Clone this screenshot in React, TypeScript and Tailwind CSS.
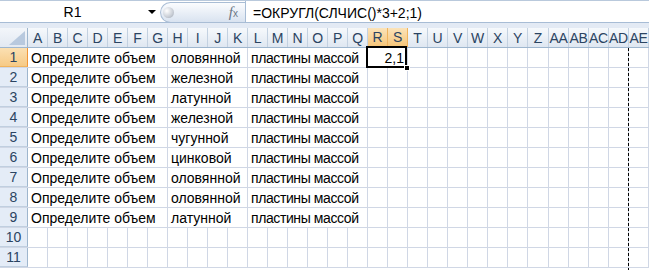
import React from "react";

const COLS = [
  "A", "B", "C", "D", "E", "F", "G", "H", "I", "J", "K", "L", "M", "N", "O",
  "P", "Q", "R", "S", "T", "U", "V", "W", "X", "Y", "Z", "AA", "AB", "AC", "AD", "AE",
];

// columns after the text overflow area (R..AE)
const TAIL = COLS.slice(17);

const ROWS: [string, string, string][] = [
  ["Определите объем", "оловянной", "пластины массой"],
  ["Определите объем", "железной", "пластины массой"],
  ["Определите объем", "латунной", "пластины массой"],
  ["Определите объем", "железной", "пластины массой"],
  ["Определите объем", "чугунной", "пластины массой"],
  ["Определите объем", "цинковой", "пластины массой"],
  ["Определите объем", "оловянной", "пластины массой"],
  ["Определите объем", "оловянной", "пластины массой"],
  ["Определите объем", "латунной", "пластины массой"],
];

function colWidth(c: string) {
  if (c === "Z") return "w-[21px]";
  if (c === "AE") return "flex-1";
  return "w-[20px]";
}

function ColHeader({ name }: { name: string }) {
  const active = name === "R" || name === "S";
  return (
    <div
      className={
        colWidth(name) +
        " h-full shrink-0 flex items-center justify-center border-r text-[14px] leading-none tracking-[-0.3px] " +
        (active
          ? "bg-gradient-to-b from-[#fbe3b9] to-[#f6c67a] border-[#f0b45e] border-b-[#f29536] border-b"
          : "bg-gradient-to-b from-[#f6f9fc] to-[#dfe7f1] border-[#c3d1e1]")
      }
    >
      <span className="text-[#2b4462]">{name}</span>
    </div>
  );
}

function RowHeader({ n }: { n: number }) {
  const active = n === 1;
  return (
    <div
      className={
        "w-[28px] h-full shrink-0 flex items-center justify-center border-r border-b text-[14px] text-[#2b4462] " +
        (active
          ? "bg-gradient-to-b from-[#fbe0b2] to-[#f6ca86] border-r-[#f29536] border-b-[#f0b45e]"
          : "bg-[#e4ecf7] border-r-[#9eb6ce] border-b-[#c0cfe0]")
      }
    >
      {n}
    </div>
  );
}

function EmptyCell({ name }: { name: string }) {
  return <div className={colWidth(name) + " h-full shrink-0 border-r border-[#d0d7e5]"} />;
}

function TextCell({ w, text, tight }: { w: string; text: string; tight?: boolean }) {
  return (
    <div
      className={
        w +
        " h-full shrink-0 border-r border-[#d0d7e5] pl-[3px] leading-[21px] whitespace-nowrap overflow-hidden" +
        (tight ? " tracking-[-0.4px]" : "")
      }
    >
      {text}
    </div>
  );
}

export default function App() {
  return (
    <div className="relative w-[649px] h-[270px] overflow-hidden bg-white font-['Liberation_Sans',Arial,sans-serif] text-[14px] text-black">
      {/* formula bar */}
      <div className="h-[28px] bg-[#e3eaf4] border-t border-[#b9c9dc] flex flex-col">
        <div className="h-[22px] flex bg-white border-b border-[#a7bcd5]">
          <div className="w-[160px] flex items-center">
            <div className="w-[145px] text-center pt-[2px]">R1</div>
            <div className="w-0 h-0 border-l-[4px] border-r-[4px] border-t-[4px] border-l-transparent border-r-transparent border-t-black ml-[3px]" />
          </div>
          <div className="w-[85px] mt-[1px] mb-[-1px] rounded-l-full border border-r-0 border-[#a9bdd5] bg-gradient-to-b from-[#fbfcfe] to-[#d9e3f0] flex items-center pl-[2px]">
            <div className="w-[11px] h-[11px] rounded-full bg-[radial-gradient(circle_at_35%_35%,#ffffff,#c9ced6_60%,#9aa2ae)]" />
            <div className="ml-auto mr-[7px] font-['Liberation_Serif',serif] italic text-[#6a7584] text-[15px] leading-none">
              f<span className="text-[10px] not-italic font-['Liberation_Sans',sans-serif]">x</span>
            </div>
          </div>
          <div className="flex-1 border-l border-[#a7bcd5] pl-[7px] pt-[3px] leading-[19px]">
            =ОКРУГЛ(СЛЧИС()*3+2;1)
          </div>
        </div>
      </div>

      {/* column headers */}
      <div className="h-[20px] flex border-b border-[#9eb6ce]">
        <div className="w-[28px] h-full shrink-0 border-r border-[#9eb6ce] bg-gradient-to-b from-[#f3f6fa] to-[#e2e9f2] flex items-end justify-end pr-[2px] pb-[2px]">
          <div className="w-0 h-0 border-b-[14px] border-b-[#b8c9de] border-l-[16px] border-l-transparent" />
        </div>
        {COLS.map((c) => (
          <ColHeader key={c} name={c} />
        ))}
      </div>

      {/* data rows */}
      {ROWS.map((r, i) => (
        <div key={i} className="h-[20px] flex border-b border-[#d0d7e5]">
          <RowHeader n={i + 1} />
          <TextCell w="w-[140px]" text={r[0]} />
          <TextCell w="w-[80px]" text={r[1]} />
          <TextCell w="w-[120px]" text={r[2]} tight />
          {i === 0 ? (
            <>
              <div className="relative w-[40px] h-full shrink-0 border-r border-[#d0d7e5] text-right pr-[3px] leading-[21px]">
                2,1
                <div className="absolute -top-[2px] -left-[2px] right-0 -bottom-px border-2 border-black" />
                <div className="absolute -right-[3px] -bottom-[4px] w-[6px] h-[6px] bg-black border border-white" />
              </div>
              {TAIL.slice(2).map((c) => (
                <EmptyCell key={c} name={c} />
              ))}
            </>
          ) : (
            TAIL.map((c) => <EmptyCell key={c} name={c} />)
          )}
        </div>
      ))}

      {[10, 11].map((n) => (
        <div key={n} className="h-[20px] flex border-b border-[#d0d7e5]">
          <RowHeader n={n} />
          {COLS.map((c) => (
            <EmptyCell key={c} name={c} />
          ))}
        </div>
      ))}

      {/* page break line */}
      <div className="absolute left-[628px] top-[48px] bottom-0 w-px bg-[repeating-linear-gradient(to_bottom,#000_0_3px,transparent_3px_5px)]" />
    </div>
  );
}
